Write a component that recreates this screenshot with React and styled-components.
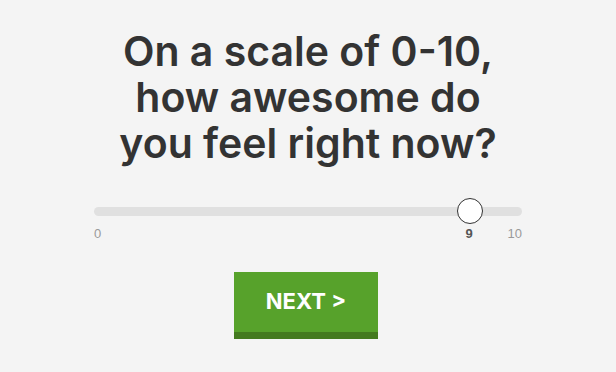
import React from "react";
import styled, { createGlobalStyle } from "styled-components";

const Global = createGlobalStyle`
  html, body { margin: 0; padding: 0; background: #f4f4f4; }
  body { font-family: "Liberation Sans", Arial, sans-serif; }
`;

const Page = styled.div`
  width: 616px;
  height: 372px;
  display: flex;
  flex-direction: column;
  align-items: center;
  box-sizing: border-box;
  padding-top: 28px;
`;

const Title = styled.h1`
  margin: 0;
  font-family: Inter, "Noto Sans", sans-serif;
  font-weight: 600;
  font-size: 41px;
  line-height: 46px;
  color: #333333;
  text-align: center;
`;

const SliderBlock = styled.div`
  width: 428px;
  margin-top: 32px;
  display: flex;
  flex-direction: column;
`;

const TrackWrap = styled.div`
  position: relative;
  height: 26px;
  display: flex;
  align-items: center;
`;

const Track = styled.div`
  width: 100%;
  height: 9px;
  border-radius: 5px;
  background: #e0e0e0;
`;

const Thumb = styled.div`
  position: absolute;
  top: 0;
  width: 24px;
  height: 24px;
  margin-left: -12px;
  border-radius: 50%;
  background: #ffffff;
  border: 1px solid #333;
`;

const Labels = styled.div`
  position: relative;
  height: 18px;
  margin-top: 2px;
  font-family: "Liberation Sans", Arial, sans-serif;
  font-size: 13px;
  color: #9a9a9a;
  display: flex;
  justify-content: space-between;
`;

const Current = styled.span`
  position: absolute;
  top: 0;
  transform: translateX(-50%);
  font-weight: bold;
  color: #555;
`;

const NextButton = styled.button`
  margin-top: 28px;
  margin-right: 4px;
  width: 144px;
  height: 67px;
  box-sizing: border-box;
  border: none;
  border-bottom: 7px solid #447a1f;
  background: #57a22b;
  color: #ffffff;
  font-family: Inter, "Noto Sans", sans-serif;
  font-weight: 700;
  font-size: 22px;
  padding: 0 0 2px;
  cursor: pointer;
`;

export default function App() {
  const value = 9;
  const max = 10;
  const width = 428;
  const thumb = 25;
  const pos = thumb / 2 + (value / max) * (width - thumb);
  return (
    <>
      <Global />
      <Page>
        <Title>
          On a scale of 0-10,
          <br />
          how awesome do
          <br />
          you feel right now?
        </Title>
        <SliderBlock>
          <TrackWrap>
            <Track />
            <Thumb style={{ left: pos }} />
          </TrackWrap>
          <Labels>
            <span>0</span>
            <Current style={{ left: pos }}>{value}</Current>
            <span>10</span>
          </Labels>
        </SliderBlock>
        <NextButton>NEXT &gt;</NextButton>
      </Page>
    </>
  );
}
